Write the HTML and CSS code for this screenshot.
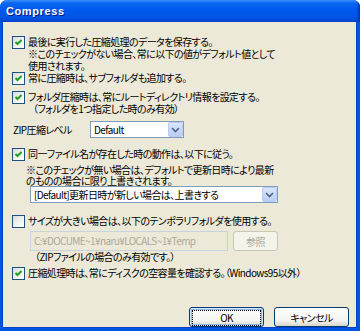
FILE: index.html
```html
<!DOCTYPE html>
<html lang="ja">
<head>
    <meta charset="UTF-8">
    <meta name="viewport" content="width=device-width, initial-scale=1.0">
    <title>Compress</title>
    <link rel="stylesheet" href="styles.css">
</head>
<body>
    <div class="window">
        <div class="titlebar">
            <span class="title">Compress</span>
        </div>

        <div class="client">
            <div class="check-row row1">
                <span class="cb"><svg width="11" height="11" viewBox="0 0 11 11"><polyline points="2.5,5 4.5,7 8.5,3" fill="none" stroke="#21A121" stroke-width="2"/></svg></span>
                <div class="label">最後に実行した圧縮処理のデータを保存する。<br>※このチェックがない場合、常に以下の値がデフォルト値として<br>使用されます。</div>
            </div>

            <div class="check-row row2">
                <span class="cb"><svg width="11" height="11" viewBox="0 0 11 11"><polyline points="2.5,5 4.5,7 8.5,3" fill="none" stroke="#21A121" stroke-width="2"/></svg></span>
                <div class="label">常に圧縮時は、サブフォルダも追加する。</div>
            </div>

            <div class="check-row row3">
                <span class="cb"><svg width="11" height="11" viewBox="0 0 11 11"><polyline points="2.5,5 4.5,7 8.5,3" fill="none" stroke="#21A121" stroke-width="2"/></svg></span>
                <div class="label">フォルダ圧縮時は、常にルートディレクトリ情報を設定する。<br><span class="indent">（フォルダを1つ指定した時のみ有効）</span></div>
            </div>

            <div class="zip-row">
                <span class="zip-label">ZIP圧縮レベル</span>
                <div class="combo combo-small">
                    <span class="combo-text">Default</span>
                    <span class="combo-btn"><svg width="9" height="6" viewBox="0 0 9 6"><polyline points="1,1 4.5,4.5 8,1" fill="none" stroke="#4D6185" stroke-width="1.6"/></svg></span>
                </div>
            </div>

            <div class="check-row row4">
                <span class="cb"><svg width="11" height="11" viewBox="0 0 11 11"><polyline points="2.5,5 4.5,7 8.5,3" fill="none" stroke="#21A121" stroke-width="2"/></svg></span>
                <div class="label">同一ファイル名が存在した時の動作は、以下に従う。</div>
            </div>

            <div class="note note1">※このチェックが無い場合は、デフォルトで更新日時により最新<br>のものの場合に限り上書きされます。</div>

            <div class="combo combo-wide">
                <span class="combo-text">[Default]更新日時が新しい場合は、上書きする</span>
                <span class="combo-btn"><svg width="9" height="6" viewBox="0 0 9 6"><polyline points="1,1 4.5,4.5 8,1" fill="none" stroke="#4D6185" stroke-width="1.6"/></svg></span>
            </div>

            <div class="check-row row5">
                <span class="cb"></span>
                <div class="label">サイズが大きい場合は、以下のテンポラリフォルダを使用する。</div>
            </div>

            <div class="temp-row">
                <div class="edit disabled">C:¥DOCUME~1¥naru¥LOCALS~1¥Temp</div>
                <button class="btn btn-small" disabled>参照</button>
            </div>

            <div class="note note2">（ZIPファイルの場合のみ有効です。）</div>

            <div class="check-row row6">
                <span class="cb"><svg width="11" height="11" viewBox="0 0 11 11"><polyline points="2.5,5 4.5,7 8.5,3" fill="none" stroke="#21A121" stroke-width="2"/></svg></span>
                <div class="label">圧縮処理時は、常にディスクの空容量を確認する。（Windows95以外）</div>
            </div>

            <div class="buttons">
                <button class="btn default"><span class="focus">OK</span></button>
                <button class="btn">キャンセル</button>
            </div>
        </div>
    </div>
</body>
</html>
```

FILE: styles.css
```css
body {
    margin: 0;
    background: #fff;
    font-family: "Noto Sans CJK JP", "Liberation Sans", sans-serif;
    font-size: 10px;
    color: #000;
}
.window {
    width: 360px;
    height: 331px;
    display: flex;
    flex-direction: column;
    border-radius: 7px 7px 0 0;
    overflow: hidden;
    background: #0055E5;
}
.titlebar {
    height: 22px;
    flex: none;
    padding-left: 6px;
    background: linear-gradient(to bottom, #3D95FF 0, #0A66F0 3px, #0058EE 10px, #0055E5 17px, #0046CE 22px);
    box-shadow: inset -3px 0 2px -1px #0036B4;
}
.title {
    display: block;
    line-height: 23px;
    font-family: "Liberation Sans", sans-serif;
    font-weight: bold;
    font-size: 11px;
    letter-spacing: 0.6px;
    color: #fff;
    text-shadow: 1px 1px 0 #0A1883;
}
.client {
    flex: 1;
    margin: 0 4px 4px 3px;
    padding: 14px 7px 0 9px;
    background: #ECE9D8;
    box-shadow: 0 0 0 1px #0042C8;
    line-height: 12px;
    white-space: nowrap;
    letter-spacing: -0.6px;
    font-feature-settings: "palt";
}
.check-row {
    display: flex;
    align-items: flex-start;
    gap: 3px;
}
.cb {
    width: 13px;
    height: 13px;
    box-sizing: border-box;
    border: 1px solid #1C5180;
    background: linear-gradient(135deg, #DCDCD7 0%, #F4F4F0 60%, #FFFFFF 100%);
    flex: none;
}
.cb svg {
    display: block;
}
.label {
    line-height: 12px;
}
.indent {
    padding-left: 5px;
}
.row3 { margin-top: 6px; }
.row4 { margin-top: 10px; }
.row5 { margin-top: 12px; }
.row6 { margin-top: 5px; }

.zip-row {
    display: flex;
    align-items: center;
    margin-top: 6px;
    padding-left: 1px;
}
.zip-label {
    width: 77px;
}
.combo {
    height: 17px;
    box-sizing: border-box;
    border: 1px solid #7F9DB9;
    background: #fff;
    display: flex;
    align-items: center;
}
.combo-small {
    width: 94px;
}
.combo-wide {
    width: 248px;
    margin-left: 18px;
}
.combo-text {
    flex: 1;
    padding-left: 3px;
}
.combo-btn {
    width: 15px;
    height: 15px;
    box-sizing: border-box;
    border: 1px solid #B9CCF5;
    border-radius: 2px;
    background: linear-gradient(to bottom, #DAE5FC, #B9CDF6);
    display: flex;
    align-items: center;
    justify-content: center;
}
.combo-btn svg {
    display: block;
}
.note {
    line-height: 11px;
}
.note1 {
    margin-top: 3px;
    padding-left: 14px;
}
.note2 {
    padding-left: 23px;
}
.temp-row {
    display: flex;
    gap: 5px;
    margin-top: 3px;
    padding-left: 18px;
}
.edit {
    width: 198px;
    height: 20px;
    box-sizing: border-box;
    border: 1px solid #C9D3DE;
    padding-left: 3px;
    line-height: 18px;
}
.edit.disabled {
    color: #ACA899;
    background: #ECE9D8;
}
.btn {
    font-family: inherit;
    font-size: 10px;
    letter-spacing: -0.6px;
    font-feature-settings: "palt";
    width: 75px;
    height: 20px;
    padding: 0;
    border: 1px solid #003C74;
    border-radius: 3px;
    background: linear-gradient(to bottom, #FFFFFF 0%, #F4F4F0 70%, #D8D5C6 100%);
    color: #000;
}
.btn-small {
    width: 45px;
}
.btn:disabled {
    border-color: #C9C7BA;
    background: #F5F4EA;
    color: #ACA899;
}
.btn.default {
    box-shadow: inset 0 0 0 1px #CEE7FF, inset 0 0 0 2px #98B8EA;
}
.focus {
    display: inline-block;
    width: 67px;
    line-height: 14px;
    outline: 1px dotted #000;
}
.buttons {
    display: flex;
    justify-content: flex-end;
    gap: 10px;
    margin-top: 27px;
}
```
